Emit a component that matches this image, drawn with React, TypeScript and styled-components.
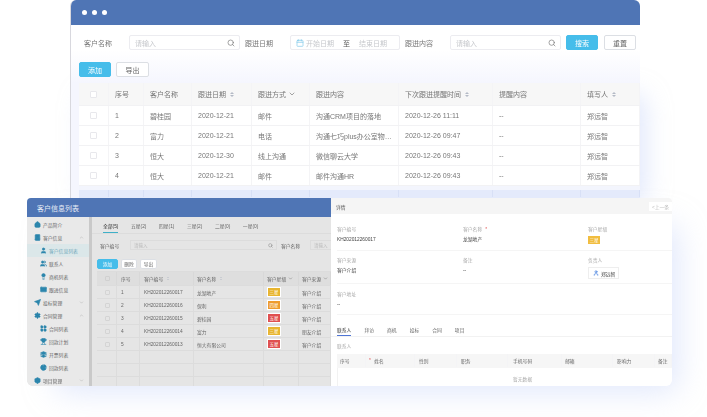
import React from 'react';
import styled, { createGlobalStyle } from 'styled-components';
import {
  Search, Calendar, ChevronDown, ChevronUp, Home, BookUser, User, Users, Lightbulb, Mail, Send,
  Settings, LayoutGrid, Trophy, Layers, PieChart, Box,
} from 'lucide-react';

const GlobalStyle = createGlobalStyle`
  html, body { margin: 0; padding: 0; background: #fff; }
  body { font-family: "Liberation Sans", "Noto Sans CJK SC", sans-serif; color: #777; }
`;

const Stage = styled.div`
  position: relative;
  width: 707px;
  height: 417px;
  overflow: hidden;
  background: #fff;
`;

const Window = styled.section<{ $x: number; $y: number; $w: number; $h: number; $z: number }>`
  position: absolute;
  left: ${(p) => p.$x}px;
  top: ${(p) => p.$y}px;
  width: ${(p) => p.$w}px;
  height: ${(p) => p.$h}px;
  z-index: ${(p) => p.$z};
  display: flex;
  flex-direction: column;
  overflow: hidden;
  background: #fff;
  filter: blur(0.5px);
`;

const Glow = styled.div<{ $x: number; $y: number; $w: number; $h: number; $spread: number; $blur: number; $alpha: number }>`
  position: absolute;
  left: ${(p) => p.$x}px;
  top: ${(p) => p.$y}px;
  width: ${(p) => p.$w}px;
  height: ${(p) => p.$h}px;
  border-radius: 8px;
  box-shadow: 0 0 ${(p) => p.$blur}px ${(p) => p.$spread}px rgba(196, 209, 250, ${(p) => p.$alpha});
`;

const MainWindow = styled(Window)`
  border-radius: 6px 6px 0 0;
  border-left: 1px solid #d8d8de;
  box-sizing: border-box;
  background: linear-gradient(#fff 50px, #f5f6fe 83px);
`;

const MainHeader = styled.header`
  height: 25px;
  flex: none;
  display: flex;
  align-items: center;
  gap: 5px;
  padding-left: 11px;
  background: #4f75b5;
`;

const Dot = styled.i`
  width: 5px;
  height: 5px;
  border-radius: 50%;
  background: #fff;
`;

const FilterRow = styled.div`
  height: 35px;
  flex: none;
  display: flex;
  align-items: center;
  padding-left: 13px;
  font-size: 7px;
  white-space: nowrap;
`;

const FilterLabel = styled.span<{ $w: number; $pad?: number }>`
  box-sizing: border-box;
  width: ${(p) => p.$w}px;
  padding-left: ${(p) => p.$pad ?? 0}px;
  flex: none;
`;

const FilterInput = styled.div<{ $w: number }>`
  box-sizing: border-box;
  width: ${(p) => p.$w}px;
  height: 15px;
  flex: none;
  display: flex;
  align-items: center;
  justify-content: space-between;
  padding: 0 4px 0 5px;
  border: 1px solid #ececf0;
  border-radius: 2px;
  color: #c6c8cc;
  svg { color: #777; }
`;

const RangeSep = styled.span`
  color: #555;
  margin: 0 7px;
`;

const RangeText = styled.span`
  color: #c6c8cc;
`;

const RangeInput = styled(FilterInput)`
  justify-content: flex-start;
  gap: 2px;
  margin-right: 5px;
  svg { color: #7fc8ea; }
`;

const Button = styled.button<{ $primary?: boolean; $w: number; $h: number; $size: number; $left?: number }>`
  box-sizing: border-box;
  width: ${(p) => p.$w}px;
  height: ${(p) => p.$h}px;
  flex: none;
  margin-left: ${(p) => p.$left ?? 0}px;
  padding: 0;
  border-radius: 2px;
  font: inherit;
  font-size: ${(p) => p.$size}px;
  color: ${(p) => (p.$primary ? '#fff' : '#666')};
  background: ${(p) => (p.$primary ? '#46bdea' : '#fff')};
  border: 1px solid ${(p) => (p.$primary ? '#46bdea' : '#dcdfe4')};
`;

const Toolbar = styled.div<{ $gap: number; $pad: number; $h: number }>`
  height: ${(p) => p.$h}px;
  flex: none;
  display: flex;
  align-items: center;
  gap: ${(p) => p.$gap}px;
  padding-left: ${(p) => p.$pad}px;
`;

const MainTable = styled.div`
  flex: none;
  margin: 4px 0 0 8px;
  font-size: 7px;
  background: #fff;
`;

const Row = styled.div<{ $cols: string; $h: number; $bg?: string; $line?: string }>`
  display: grid;
  grid-template-columns: ${(p) => p.$cols};
  height: ${(p) => p.$h}px;
  box-sizing: border-box;
  background: ${(p) => p.$bg || 'transparent'};
  border-bottom: 1px solid ${(p) => p.$line || '#f2f2f4'};
`;

const Cell = styled.div<{ $pad?: number; $line?: string }>`
  display: flex;
  align-items: center;
  gap: 2px;
  min-width: 0;
  overflow: hidden;
  white-space: nowrap;
  padding-left: ${(p) => p.$pad ?? 6}px;
  border-right: 1px solid ${(p) => p.$line || '#f4f4f6'};
`;

const Check = styled.i<{ $size: number; $tone?: string }>`
  width: ${(p) => p.$size}px;
  height: ${(p) => p.$size}px;
  box-sizing: border-box;
  border: 1px solid ${(p) => p.$tone || '#e8e8ec'};
  border-radius: 1px;
  background: ${(p) => (p.$tone ? 'transparent' : '#fff')};
`;

const Sort = styled.i<{ $size: number }>`
  display: inline-flex;
  flex-direction: column;
  gap: 1px;
  margin-left: 2px;
  &::before, &::after {
    content: '';
    border-left: ${(p) => p.$size}px solid transparent;
    border-right: ${(p) => p.$size}px solid transparent;
  }
  &::before { border-bottom: ${(p) => p.$size}px solid #b4bac6; }
  &::after { border-top: ${(p) => p.$size}px solid #b4bac6; }
`;

const ListWindow = styled(Window)`
  border-radius: 4px 0 0 6px;
`;

const ListHeader = styled.header`
  height: 19px;
  flex: none;
  display: flex;
  align-items: center;
  padding-left: 10px;
  background: #4f75b5;
  color: #e6ecf6;
  font-size: 7px;
`;

const ListBody = styled.div`
  flex: 1;
  min-height: 0;
  display: flex;
  background: #e5e5e5;
`;

const Sidebar = styled.nav`
  width: 62px;
  flex: none;
  padding-top: 0.5px;
  background: #e9e9e9;
  border-right: 3px solid #c9c9c9;
`;

const NavItem = styled.div<{ $sub?: boolean; $active?: boolean }>`
  height: 13px;
  display: flex;
  align-items: center;
  gap: 2px;
  padding-left: ${(p) => (p.$sub ? 13 : 7)}px;
  padding-right: 5px;
  font-size: 4.8px;
  color: ${(p) => (p.$active ? '#6fa8ba' : '#666')};
  background: ${(p) => (p.$active ? '#dbe7e9' : 'transparent')};
  & > svg { color: #2c86ad; fill: #2c86ad; flex: none; }
`;

const NavArrow = styled.span`
  margin-left: auto;
  display: flex;
  color: #aaa;
`;

const ListMain = styled.div`
  flex: 1;
  min-width: 0;
  display: flex;
  flex-direction: column;
  font-size: 4.8px;
  color: #666;
`;

const Tabs = styled.div<{ $pad: number; $gap: number; $h: number; $line: string }>`
  height: ${(p) => p.$h}px;
  flex: none;
  display: flex;
  gap: ${(p) => p.$gap}px;
  padding-left: ${(p) => p.$pad}px;
  border-bottom: 1px solid ${(p) => p.$line};
  box-sizing: border-box;
`;

const Tab = styled.span<{ $on?: boolean; $tone: string }>`
  display: flex;
  align-items: center;
  font-size: 4.8px;
  color: ${(p) => (p.$on ? '#333' : '#666')};
  box-shadow: ${(p) => (p.$on ? `inset 0 -1px 0 ${p.$tone}` : 'none')};
`;

const SearchRow = styled.div`
  height: 22px;
  flex: none;
  display: flex;
  align-items: center;
  padding-left: 8px;
  white-space: nowrap;
`;

const SmallInput = styled.div<{ $w: number }>`
  box-sizing: border-box;
  width: ${(p) => p.$w}px;
  height: 10px;
  flex: none;
  display: flex;
  align-items: center;
  justify-content: space-between;
  padding: 0 3px;
  border: 1px solid #dcdcdc;
  color: #bbb;
  font-size: 4.5px;
  svg { color: #777; }
`;

const SmallLabel = styled.span<{ $w: number; $pad?: number }>`
  box-sizing: border-box;
  width: ${(p) => p.$w}px;
  padding-left: ${(p) => p.$pad ?? 0}px;
  flex: none;
`;

const SmallTable = styled.div`
  flex: 1;
  margin-left: 5px;
  border-top: 1px solid #dcdcdc;
`;

const Badge = styled.span<{ $bg: string }>`
  display: flex;
  align-items: center;
  justify-content: center;
  width: 12px;
  height: 8.5px;
  border: 0.5px solid #fff;
  background: ${(p) => p.$bg};
  color: #fff;
  font-size: 4.5px;
`;

const DetailWindow = styled(Window)`
  border-radius: 0 4px 6px 0;
  font-size: 4.8px;
  color: #666;
`;

const DetailHeader = styled.header`
  height: 16px;
  flex: none;
  display: flex;
  align-items: center;
  justify-content: space-between;
  padding-left: 5px;
  background: #f5f5f5;
  color: #555;
`;

const PrevButton = styled.span`
  width: 23px;
  height: 9px;
  display: flex;
  align-items: center;
  justify-content: center;
  background: #fff;
  color: #bbb;
`;

const FieldRow = styled.div<{ $h: number; $top: number }>`
  display: grid;
  grid-template-columns: 126px 125px 1fr;
  height: ${(p) => p.$h}px;
  margin-left: 6px;
  padding-top: ${(p) => p.$top}px;
  box-sizing: border-box;
  border-bottom: 1px solid #f5f5f5;
`;

const Field = styled.div`
  display: flex;
  flex-direction: column;
  align-items: flex-start;
  gap: 3px;
`;

const FieldLabel = styled.span`
  color: #aaa;
  height: 7px;
  line-height: 7px;
  em { color: #e25555; font-style: normal; margin-left: 3px; }
`;

const FieldValue = styled.span`
  color: #444;
  height: 8px;
  line-height: 8px;
`;

const FlatBadge = styled.span`
  width: 12px;
  height: 8px;
  display: flex;
  align-items: center;
  justify-content: center;
  font-size: 4.5px;
  color: #fff;
  background: #f1bd3f;
`;

const OwnerChip = styled.span`
  display: flex;
  align-items: center;
  gap: 2px;
  height: 10px;
  padding: 0 3px 0 4px;
  border: 1px solid #eee;
  color: #444;
  svg { color: #4a84e0; }
`;

const SectionLabel = styled.div`
  height: 17px;
  flex: none;
  display: flex;
  align-items: center;
  padding-left: 6px;
  color: #aaa;
`;

const DetailTable = styled.div`
  flex: 1;
  margin-left: 6px;
  box-shadow: inset 1px 0 0 #f2f2f2;
`;

const Empty = styled.div`
  padding: 7px 0 0 176px;
  color: #aaa;
`;

const TabSpacer = styled.div`
  height: 7px;
  flex: none;
`;

const MAIN_COLS = '30px 35px 48px 60px 58px 89px 94px 88px 1fr';
const LIST_COLS = '20px 23px 54px 70px 35px 1fr';
const DETAIL_COLS = '29px 49px 42px 51px 54px 51px 42px 1fr';

const followUps = [
  ['1', '碧桂园', '2020-12-21', '邮件', '沟通CRM项目的落地', '2020-12-26 11:11'],
  ['2', '富力', '2020-12-21', '电话', '沟通七巧plus办公室物…', '2020-12-26 09:47'],
  ['3', '恒大', '2020-12-30', '线上沟通', '微信聊云大学', '2020-12-26 09:43'],
  ['4', '恒大', '2020-12-21', '邮件', '邮件沟通HR', '2020-12-26 09:43'],
];

const customers = [
  ['1', 'KH202012260017', '龙湖地产', '三星', '#e8b52f', '客户介绍'],
  ['2', 'KH202012260016', '保利', '四星', '#ee9c2d', '客户介绍'],
  ['3', 'KH202012260015', '碧桂园', '五星', '#e05050', '客户介绍'],
  ['4', 'KH202012260014', '富力', '三星', '#e8b52f', '朋友介绍'],
  ['5', 'KH202012260013', '恒大有限公司', '五星', '#e05050', '客户介绍'],
];

const nav = [
  { label: '产品简介', Icon: Home },
  { label: '客户信息', Icon: BookUser, arrow: 'up' },
  { label: '客户信息列表', Icon: User, sub: true, active: true },
  { label: '联系人', Icon: Users, sub: true },
  { label: '商机列表', Icon: Lightbulb, sub: true },
  { label: '跟进信息', Icon: Mail, sub: true },
  { label: '投标管理', Icon: Send, arrow: 'down' },
  { label: '合同管理', Icon: Settings, arrow: 'up' },
  { label: '合同列表', Icon: LayoutGrid, sub: true },
  { label: '回款计划', Icon: Trophy, sub: true },
  { label: '开票列表', Icon: Layers, sub: true },
  { label: '回款列表', Icon: PieChart, sub: true },
  { label: '项目管理', Icon: Box, arrow: 'down' },
];

const App: React.FC = () => {
  return (
    <Stage>
      <GlobalStyle />
      <Glow $x={90} $y={100} $w={550} $h={98} $spread={6} $blur={24} $alpha={0.5} />
      <Glow $x={60} $y={230} $w={612} $h={156} $spread={6} $blur={30} $alpha={0.5} />

      <MainWindow $x={70} $y={0} $w={570} $h={198} $z={1}>
        <MainHeader>
          <Dot />
          <Dot />
          <Dot />
        </MainHeader>
        <FilterRow>
          <FilterLabel $w={45}>客户名称</FilterLabel>
          <FilterInput $w={111}>
            请输入
            <Search size={8} />
          </FilterInput>
          <FilterLabel $w={50} $pad={5}>跟进日期</FilterLabel>
          <RangeInput $w={110}>
            <Calendar size={8} />
            <RangeText>开始日期</RangeText>
            <RangeSep>至</RangeSep>
            <RangeText>结束日期</RangeText>
          </RangeInput>
          <FilterLabel $w={45}>跟进内容</FilterLabel>
          <FilterInput $w={111}>
            请输入
            <Search size={8} />
          </FilterInput>
          <Button $primary $w={32} $h={15} $size={7} $left={5}>搜索</Button>
          <Button $w={32} $h={15} $size={7} $left={6}>重置</Button>
        </FilterRow>
        <Toolbar $gap={5} $pad={8} $h={19}>
          <Button $primary $w={32} $h={15} $size={7}>添加</Button>
          <Button $w={33} $h={15} $size={7}>导出</Button>
        </Toolbar>
        <MainTable>
          <Row $cols={MAIN_COLS} $h={23} $bg="#f7f7f7">
            <Cell $pad={11}><Check $size={7} /></Cell>
            <Cell>序号</Cell>
            <Cell>客户名称</Cell>
            <Cell>跟进日期<Sort $size={2} /></Cell>
            <Cell>跟进方式<ChevronDown size={8} /></Cell>
            <Cell>跟进内容</Cell>
            <Cell>下次跟进提醒时间<Sort $size={2} /></Cell>
            <Cell>提醒内容</Cell>
            <Cell>填写人<Sort $size={2} /></Cell>
          </Row>
          {followUps.map((r) => (
            <Row key={r[0]} $cols={MAIN_COLS} $h={20}>
              <Cell $pad={11}><Check $size={7} /></Cell>
              {r.map((text) => <Cell key={text}>{text}</Cell>)}
              <Cell>--</Cell>
              <Cell>郑远智</Cell>
            </Row>
          ))}
          <Row $cols={MAIN_COLS} $h={4} $bg="#f3f5fd" $line="#f3f5fd" />
          <Row $cols={MAIN_COLS} $h={8} $bg="#e4eafb" $line="#e4eafb">
            {Array.from({ length: 9 }, (_, i) => <Cell key={i} $line="#d8e0f6" />)}
          </Row>
        </MainTable>
      </MainWindow>

      <ListWindow $x={27} $y={198} $w={304} $h={188} $z={2}>
        <ListHeader>客户信息列表</ListHeader>
        <ListBody>
          <Sidebar>
            {nav.map(({ label, Icon, sub, active, arrow }) => (
              <NavItem key={label} $sub={sub} $active={active}>
                <Icon size={7} strokeWidth={2} />
                {label}
                {arrow && (
                  <NavArrow>
                    {arrow === 'up' ? <ChevronUp size={5} /> : <ChevronDown size={5} />}
                  </NavArrow>
                )}
              </NavItem>
            ))}
          </Sidebar>
          <ListMain>
            <Tabs $pad={11} $gap={12.5} $h={17} $line="#dcdcdc">
              <Tab $on $tone="#3fb0c8">全部(5)</Tab>
              <Tab $tone="#3fb0c8">五星(2)</Tab>
              <Tab $tone="#3fb0c8">四星(1)</Tab>
              <Tab $tone="#3fb0c8">三星(2)</Tab>
              <Tab $tone="#3fb0c8">二星(0)</Tab>
              <Tab $tone="#3fb0c8">一星(0)</Tab>
            </Tabs>
            <SearchRow>
              <SmallLabel $w={30}>客户编号</SmallLabel>
              <SmallInput $w={147}>
                请输入
                <Search size={5} />
              </SmallInput>
              <SmallLabel $w={33} $pad={4}>客户名称</SmallLabel>
              <SmallInput $w={40}>请输入</SmallInput>
            </SearchRow>
            <Toolbar $gap={3} $pad={5} $h={15}>
              <Button $primary $w={21} $h={10} $size={4.8}>添加</Button>
              <Button $w={16} $h={10} $size={4.8}>删除</Button>
              <Button $w={17} $h={10} $size={4.8}>导出</Button>
            </Toolbar>
            <SmallTable>
              <Row $cols={LIST_COLS} $h={14} $bg="#dedede" $line="#dcdcdc">
                <Cell $pad={8} $line="#d8d8d8"><Check $size={5} $tone="#d0d0d0" /></Cell>
                <Cell $pad={4} $line="#d8d8d8">序号</Cell>
                <Cell $pad={4} $line="#d8d8d8">客户编号<Sort $size={1} /></Cell>
                <Cell $pad={3} $line="#d8d8d8">客户名称<Sort $size={1} /></Cell>
                <Cell $pad={3} $line="#d8d8d8">客户星级<ChevronDown size={5} /></Cell>
                <Cell $pad={3} $line="#d8d8d8">客户来源<ChevronDown size={5} /></Cell>
              </Row>
              {customers.map((c) => (
                <Row key={c[0]} $cols={LIST_COLS} $h={13} $line="#dcdcdc">
                  <Cell $pad={8} $line="#dcdcdc"><Check $size={5} $tone="#d4d4d4" /></Cell>
                  <Cell $pad={4} $line="#dcdcdc">{c[0]}</Cell>
                  <Cell $pad={4} $line="#dcdcdc">{c[1]}</Cell>
                  <Cell $pad={3} $line="#dcdcdc">{c[2]}</Cell>
                  <Cell $pad={3} $line="#dcdcdc"><Badge $bg={c[4]}>{c[3]}</Badge></Cell>
                  <Cell $pad={3} $line="#dcdcdc">{c[5]}</Cell>
                </Row>
              ))}
              {[0, 1, 2].map((i) => (
                <Row key={i} $cols={LIST_COLS} $h={13} $line="#dcdcdc">
                  {Array.from({ length: 6 }, (_, j) => <Cell key={j} $line="#dcdcdc" />)}
                </Row>
              ))}
            </SmallTable>
          </ListMain>
        </ListBody>
      </ListWindow>

      <DetailWindow $x={331} $y={198} $w={341} $h={188} $z={3}>
        <DetailHeader>
          详情
          <PrevButton>&lt;上一条</PrevButton>
        </DetailHeader>
        <FieldRow $h={37} $top={12}>
          <Field>
            <FieldLabel>客户编号</FieldLabel>
            <FieldValue>KH202012260017</FieldValue>
          </Field>
          <Field>
            <FieldLabel>客户名称<em>*</em></FieldLabel>
            <FieldValue>龙湖地产</FieldValue>
          </Field>
          <Field>
            <FieldLabel>客户星级</FieldLabel>
            <FlatBadge>三星</FlatBadge>
          </Field>
        </FieldRow>
        <FieldRow $h={33} $top={6}>
          <Field>
            <FieldLabel>客户来源</FieldLabel>
            <FieldValue>客户介绍</FieldValue>
          </Field>
          <Field>
            <FieldLabel>备注</FieldLabel>
            <FieldValue>--</FieldValue>
          </Field>
          <Field>
            <FieldLabel>负责人</FieldLabel>
            <OwnerChip><User size={6} strokeWidth={3} />郑远智</OwnerChip>
          </Field>
        </FieldRow>
        <FieldRow $h={31} $top={7}>
          <Field>
            <FieldLabel>客户地址</FieldLabel>
            <FieldValue>--</FieldValue>
          </Field>
        </FieldRow>
        <TabSpacer />
        <Tabs $pad={6} $gap={13} $h={15} $line="#f2f2f2">
          <Tab $on $tone="#4f75d5">联系人</Tab>
          <Tab $tone="#4f75d5">拜访</Tab>
          <Tab $tone="#4f75d5">商机</Tab>
          <Tab $tone="#4f75d5">投标</Tab>
          <Tab $tone="#4f75d5">合同</Tab>
          <Tab $tone="#4f75d5">项目</Tab>
        </Tabs>
        <SectionLabel>联系人</SectionLabel>
        <DetailTable>
          <Row $cols={DETAIL_COLS} $h={14} $bg="#f6f6f6" $line="#f6f6f6">
            <Cell $pad={3}>序号</Cell>
            <Cell $pad={0}><FieldLabel><em>*</em></FieldLabel>&nbsp;姓名</Cell>
            <Cell $pad={4}>性别</Cell>
            <Cell $pad={4}>职务</Cell>
            <Cell $pad={5}>手机号码</Cell>
            <Cell $pad={3}>邮箱</Cell>
            <Cell $pad={4}>影响力</Cell>
            <Cell $pad={3}>备注</Cell>
          </Row>
          <Empty>暂无数据</Empty>
        </DetailTable>
      </DetailWindow>
    </Stage>
  );
};

export default App;
